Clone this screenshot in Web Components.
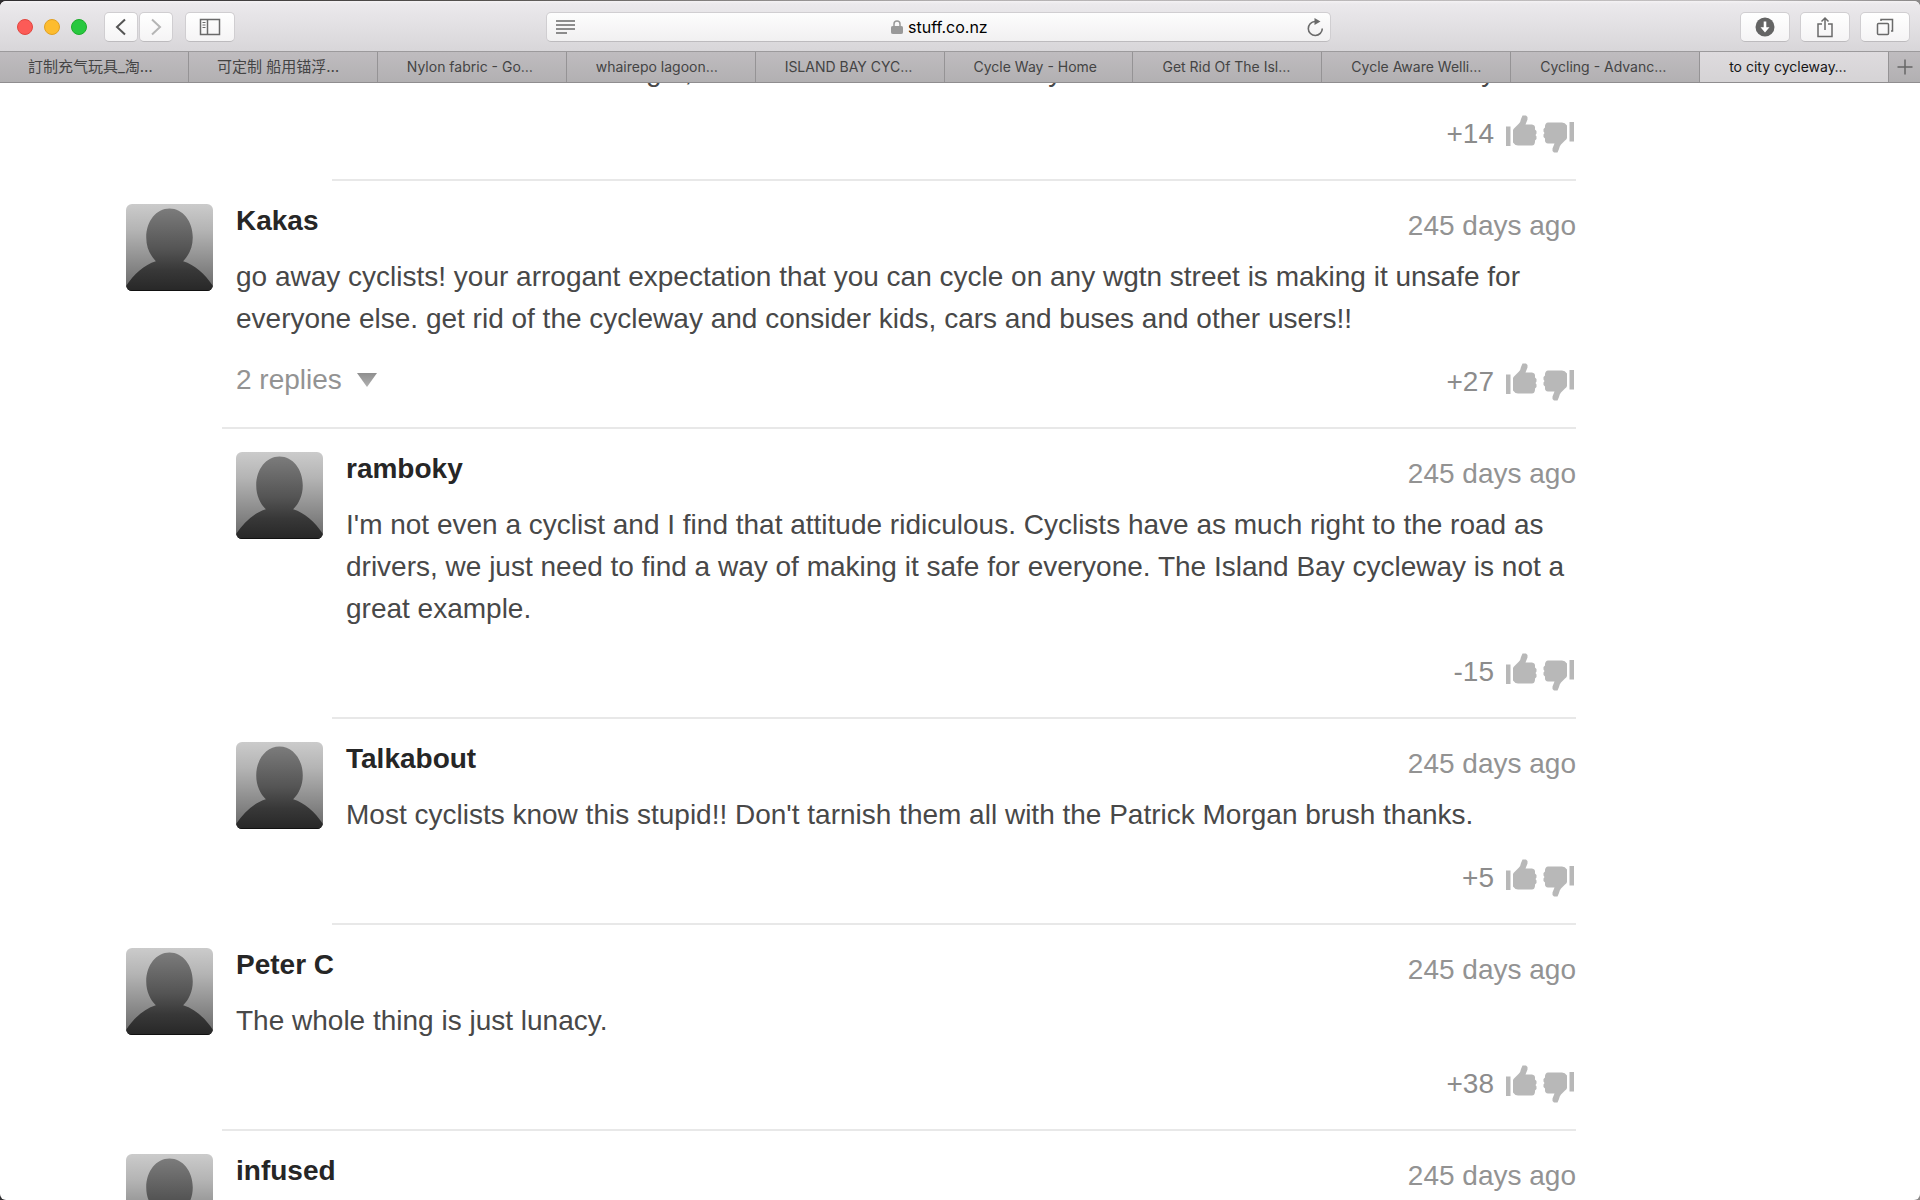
<!DOCTYPE html>
<html lang="en">
<head>
<meta charset="utf-8">
<title>to city cycleway</title>
<style>
html, body { height: 100%; margin: 0; }
body { background: linear-gradient(90deg, #2f2d30, #55524f 25%, #b5b2b3 50%, #c2bfc0 90%, #8a8888); font-family: "Liberation Sans", Arial, sans-serif; }
</style>
</head>
<body>
<browser-window>
  <browser-toolbar slot="chrome" host="stuff.co.nz"></browser-toolbar>
  <browser-tabs slot="chrome">
    <browser-tab lang="zh">訂制充气玩具_淘…</browser-tab>
    <browser-tab lang="zh">可定制 船用锚浮…</browser-tab>
    <browser-tab>Nylon fabric - Go…</browser-tab>
    <browser-tab>whairepo lagoon…</browser-tab>
    <browser-tab>ISLAND BAY CYC…</browser-tab>
    <browser-tab>Cycle Way - Home</browser-tab>
    <browser-tab>Get Rid Of The Isl…</browser-tab>
    <browser-tab>Cycle Aware Welli…</browser-tab>
    <browser-tab>Cycling - Advanc…</browser-tab>
    <browser-tab active>to city cycleway…</browser-tab>
  </browser-tabs>
  <comment-list>
    <comment-item reply tail score="+14"><clipped-line></clipped-line></comment-item>
    <comment-item author="Kakas" age="245 days ago" score="+27" replies="2 replies">go away cyclists! your arrogant expectation that you can cycle on any wgtn street is making it unsafe for everyone else. get rid of the cycleway and consider kids, cars and buses and other users!!</comment-item>
    <comment-item reply author="ramboky" age="245 days ago" score="-15">I'm not even a cyclist and I find that attitude ridiculous. Cyclists have as much right to the road as drivers, we just need to find a way of making it safe for everyone. The Island Bay cycleway is not a great example.</comment-item>
    <comment-item reply author="Talkabout" age="245 days ago" score="+5">Most cyclists know this stupid!! Don't tarnish them all with the Patrick Morgan brush thanks.</comment-item>
    <comment-item author="Peter C" age="245 days ago" score="+38">The whole thing is just lunacy.</comment-item>
    <comment-item author="infused" age="245 days ago"></comment-item>
  </comment-list>
</browser-window>

<script>
const define = (name, render) => customElements.define(name, class extends HTMLElement {
  connectedCallback() {
    if (this.shadowRoot) return;
    this.attachShadow({ mode: 'open' }).innerHTML = render(this);
  }
});

define('browser-window', () => `
<style>
:host { display: flex; flex-direction: column; height: 100vh; padding-top: 1px; box-sizing: border-box; }
.frame { flex: 1; min-height: 0; display: flex; flex-direction: column; border-radius: 6px; overflow: hidden; background: #fff; }
header { flex: none; }
main { flex: 1; min-height: 0; overflow: hidden; }
</style>
<div class="frame"><header><slot name="chrome"></slot></header><main><slot></slot></main></div>`);

define('browser-toolbar', el => `
<style>
:host { display: grid; grid-template-columns: 546fr 785fr 589fr; height: 50px; box-sizing: border-box; align-items: center; padding-top: 2px;
  background: linear-gradient(#f4f2f4 0, #ebe9ec 3px, #d8d6d9 100%); }
.left { display: flex; align-items: center; padding-left: 17px; }
.lights { display: flex; gap: 11px; margin-right: 17px; }
.lights button { width: 16px; height: 16px; border-radius: 50%; padding: 0; }
.red { background: #fc5b57; border: 1px solid #e2463f; }
.amber { background: #fdbc2e; border: 1px solid #e0a023; }
.green { background: #27c83f; border: 1px solid #1dac2b; }
.key { height: 30px; width: 50px; padding: 0; border: 1px solid #d0ced1; border-bottom-color: #bdbbbe; border-radius: 5px; background: linear-gradient(#fff, #f5f4f5); display: grid; place-items: center; }
.nav { display: flex; gap: 1px; margin-right: 12px; }
.nav .key { width: 34px; }
.right { display: flex; justify-content: flex-end; gap: 10px; padding-right: 10px; }
.field { height: 30px; box-sizing: border-box; display: flex; align-items: center; justify-content: space-between; padding: 0 6px 0 9px; border: 1px solid #d0ced1; border-bottom-color: #bdbbbe; border-radius: 5px; background: linear-gradient(#fdfdfd, #f1f0f1); }
.addr { display: flex; align-items: center; gap: 5px; }
input { font: 400 16px/20px Inter, sans-serif; color: #000; border: 0; padding: 0; background: none; width: 84px; field-sizing: content; outline: none; }
.plain { border: 0; background: none; padding: 0; display: flex; }
svg { display: block; fill: none; stroke: #6a6a6a; }
</style>
<div class="left">
  <div class="lights"><button class="red" aria-label="Close"></button><button class="amber" aria-label="Minimise"></button><button class="green" aria-label="Full screen"></button></div>
  <div class="nav">
    <button class="key" aria-label="Back"><svg width="12" height="18" viewBox="0 0 12 18" stroke-width="2" style="stroke:#555"><path d="M10 1.500 2 9l8 7.500"/></svg></button>
    <button class="key" aria-label="Forward"><svg width="12" height="18" viewBox="0 0 12 18" stroke-width="2" style="stroke:#b5b5b5"><path d="M2 1.500 10 9l-8 7.500"/></svg></button>
  </div>
  <button class="key" aria-label="Sidebar"><svg width="22" height="18" viewBox="0 0 22 18" stroke-width="1.500"><path d="M1.500 1.500h19v15h-19zM8.500 1.500v15"/><path d="M3.500 4.500h3M3.500 7h3M3.500 9.500h3" stroke-width="1"/></svg></button>
</div>
<div class="field">
  <button class="plain" aria-label="Reader"><svg width="20" height="16" viewBox="0 0 20 16" stroke-width="1.500"><path d="M0 2h19M0 6h19M0 10h19M0 14h11"/></svg></button>
  <span class="addr">
    <svg width="12" height="14" viewBox="0 0 12 14" style="stroke:#999"><path d="M3 7V4a3 3 0 0 1 6 0v3" stroke-width="1.500"/><rect x=".5" y="6.500" width="11" height="7" rx=".8" fill="#999"/></svg>
    <input aria-label="Address" value="${el.getAttribute('host')}">
  </span>
  <button class="plain" aria-label="Reload"><svg width="17" height="20" viewBox="0 0 17 20" stroke-width="1.600"><path d="M8 4.500a7 7 0 1 0 7.300 7"/><path d="M7.500 1v7l6-3.500z" fill="#6a6a6a" stroke="none"/></svg></button>
</div>
<div class="right">
  <button class="key" aria-label="Downloads"><svg width="20" height="20" viewBox="0 0 20 20"><circle cx="10" cy="10" r="9.500" fill="#646464" stroke="none"/><path d="M8.700 4.500h2.600v5.700h3.200L10 15.500l-4.500-5.300h3.200z" fill="#fff" stroke="none"/></svg></button>
  <button class="key" aria-label="Share"><svg width="18" height="22" viewBox="0 0 18 22" stroke-width="1.500"><path d="M6 8H2v12.500h14V8h-4M9 14V2M5.500 5.500 9 2l3.500 3.500"/></svg></button>
  <button class="key" aria-label="Show all tabs"><svg width="18" height="18" viewBox="0 0 18 18" stroke-width="1.500"><rect x="1.500" y="5.500" width="11" height="11" rx="1"/><path d="M5 3V1.500h11.500V13H15"/></svg></button>
</div>`);

define('browser-tabs', () => `
<style>
:host { display: flex; height: 32px; box-sizing: border-box; border-top: 1px solid #9c9a9c; border-bottom: 1px solid #8f8d8f; background: linear-gradient(#bfbcbf, #b2b0b2); }
.tabs { flex: 1; min-width: 0; display: flex; }
.add { width: 31px; border: 0; background: none; padding: 0; display: grid; place-items: center; }
</style>
<div class="tabs"><slot></slot></div>
<button class="add" aria-label="New tab"><svg width="16" height="16" viewBox="0 0 16 16" fill="none" stroke="#666" stroke-width="1.500"><path d="M8 .5v15M.5 8h15"/></svg></button>`);

define('browser-tab', () => `
<style>
:host { flex: 1; min-width: 0; display: flex; }
button { flex: 1; min-width: 0; border: 0; border-right: 1px solid #959395; background: none; padding: 0 0 0 29px; text-align: left; white-space: nowrap; overflow: hidden; font: 14px/30px Inter, "Noto Sans CJK SC", sans-serif; color: #444; }
:host([lang]) button { font-size: 15px; padding-left: 28px; }
:host([active]) button { background: linear-gradient(#dedbde, #d5d3d5); color: #151515; }
</style>
<button><slot></slot></button>`);

define('comment-list', () => `
<style>
:host { display: block; max-width: 1450px; padding-left: 126px; margin-top: -32px; }
</style><slot></slot>`);

define('user-avatar', () => `
<style>:host { display: block; } svg { display: block; border-radius: 6px; }</style>
<svg width="87" height="87" viewBox="0 0 86 86" aria-hidden="true">
<defs><linearGradient id="b" x2="0" y2="1"><stop stop-color="#cbcbcb"/><stop offset=".3" stop-color="#b4b4b4"/><stop offset="1" stop-color="#686868"/></linearGradient>
<linearGradient id="p" gradientUnits="userSpaceOnUse" x1="0" x2="0" y1="4" y2="86"><stop stop-color="#7c7c7c"/><stop offset=".5" stop-color="#545454"/><stop offset=".75" stop-color="#383838"/><stop offset="1" stop-color="#272727"/></linearGradient></defs>
<rect width="86" height="86" fill="url(#b)"/>
<path fill="url(#p)" d="M43 4.500C56 4.500 66 17 66 33C66 43 62 51 56.500 56.500C68 60 78 69 86 81V86H0V81C8 69 18 60 29.500 56.500C24 51 20 43 20 33C20 17 30 4.500 43 4.500Z"/>
<path d="M0 85.500h86" stroke="#111"/></svg>`);

define('vote-button', el => `
<style>
:host { display: block; margin-top: 2px; }
:host([down]) { margin-top: 9px; }
button { display: block; border: 0; padding: 0; background: none; }
svg { display: block; fill: #b8b8b8; }
:host([down]) svg { rotate: 180deg; }
</style>
<button aria-label="${el.hasAttribute('down') ? 'Vote down' : 'Vote up'}"><svg width="31" height="31" viewBox="0 0 31 31">
<path d="M0 11.500h4.500V31H0zM7 15Q7.500 13.500 9 12.500L13 8.500Q14.500 7 15 4L16.500 .5H20L21.500 2V4.500L19.500 9.500H26Q29 10 29 12.500V14.500L30.500 16V18.500L29.500 20L30.500 21.500V24L29 25.500V27Q28.500 30.500 26 30.500H12Q9 30.500 7 27.500Z"/></svg></button>`);

/* The bottom edge of the line that scrolls under the tab bar: only descenders show. */
define('clipped-line', () => `
<style>
:host { display: flex; height: 42px; }
.a { margin-left: 300px; } .b { margin-left: 23px; } .c { margin-left: 356px; } .d { margin-left: 419px; }
</style><span class="a">g</span><span class="b">,</span><span class="c">y</span><span class="d">y</span>`);

define('comment-item', el => {
  const a = n => el.getAttribute(n);
  const tail = el.hasAttribute('tail');
  return `
<style>
:host { display: flex; gap: 9px; font-size: 28px; line-height: 42px; color: #484848; }
:host([reply]) { padding-left: 110px; }
user-avatar, .space { flex: none; width: 87px; padding-top: 23px; }
article { flex: 1; min-width: 0; padding: 23px 0 24px 14px; border-bottom: 2px solid #e8e8e8; }
:host([tail]) article { padding-top: 0; }
header { display: flex; justify-content: space-between; height: 52px; line-height: 32px; }
h2 { margin: 0; font-size: 28px; color: #262626; padding-top: 1px; }
time { color: #939393; padding-top: 6px; }
p { margin: 0; }
footer { display: flex; justify-content: space-between; padding-top: 21px; height: 42px; color: #8c8c8c; }
:host([tail]) footer { padding-top: 20px; }
.replies { font: inherit; line-height: 38px; height: 38px; color: #939393; border: 0; padding: 0; background: none; display: flex; align-items: center; gap: 15px; }
.votes { display: flex; gap: 6px; padding-right: 2px; margin-left: auto; }
.votes span { margin-right: 6px; }
</style>
${tail ? '<div class="space"></div>' : '<user-avatar></user-avatar>'}
<article>
${tail ? '' : `<header><h2>${a('author')}</h2><time>${a('age')}</time></header>`}
${tail ? '<slot></slot>' : '<p><slot></slot></p>'}
${a('score') ? `<footer>${a('replies') ? `<button class="replies">${a('replies')}<svg width="20" height="14" viewBox="0 0 20 14"><defs><linearGradient id="t" x2="0" y2="1"><stop stop-color="#8f8f8f"/><stop offset="1" stop-color="#b0b0b0"/></linearGradient></defs><path d="M0 0h20L10 14z" fill="url(#t)"/></svg></button>` : ''}
<div class="votes"><span>${a('score')}</span><vote-button></vote-button><vote-button down></vote-button></div></footer>` : ''}
</article>`;
});
</script>
</body>
</html>
